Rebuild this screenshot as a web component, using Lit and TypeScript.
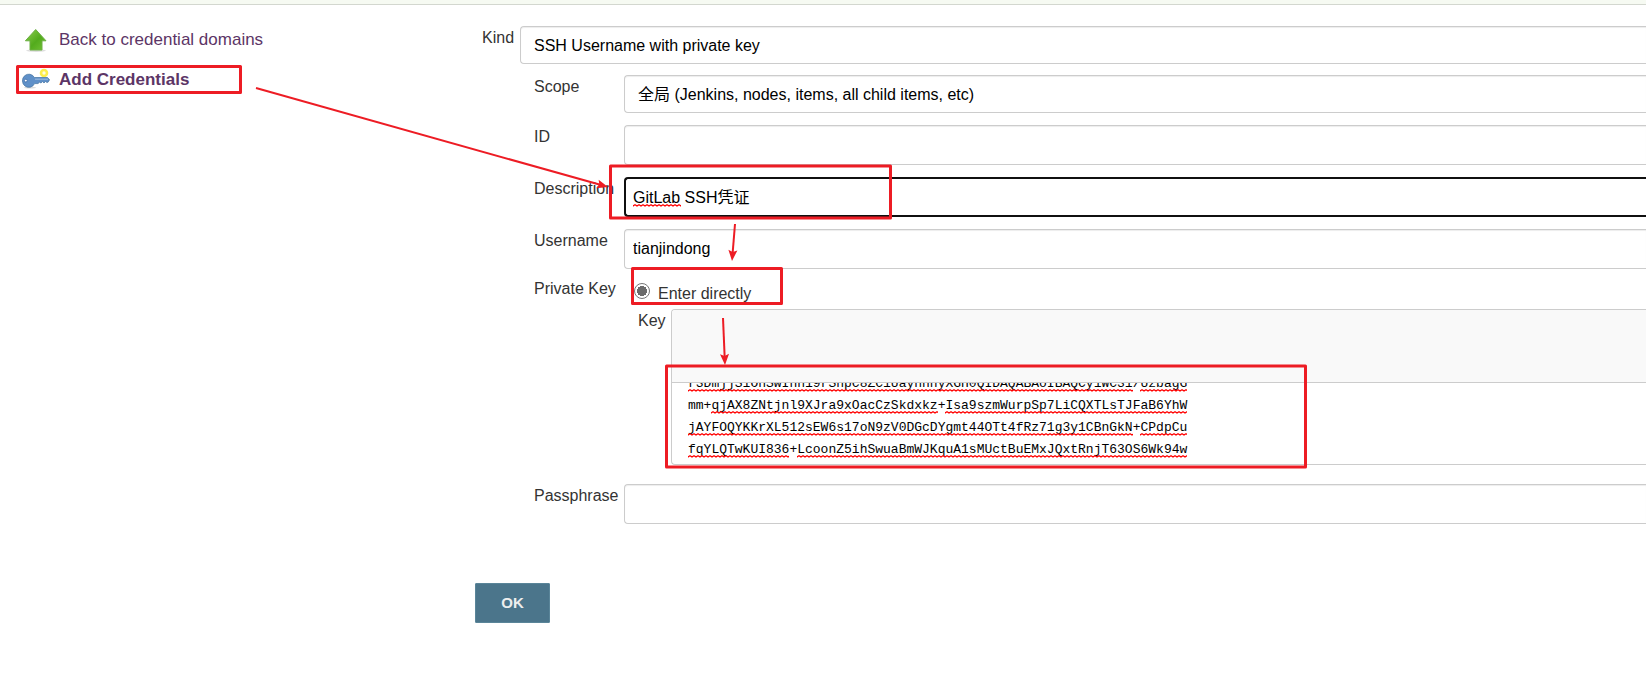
import { LitElement, html, css, svg } from "lit";
import { customElement } from "lit/decorators.js";

const KEY_LINES = [
  "r3DmjjS1OhSwIhh19rShpC8ZC1UayhhhyXGH0QIDAQABAoIBAQCy1WC31/UzbagG",
  "mm+qjAX8ZNtjnl9XJra9xOacCzSkdxkz+Isa9szmWurpSp7LiCQXTLsTJFaB6YhW",
  "jAYFOQYKKrXL512sEW6s17oN9zV0DGcDYgmt44OTt4fRz71g3y1CBnGkN+CPdpCu",
  "fqYLQTwKUI836+LcoonZ5ihSwuaBmWJKquA1sMUctBuEMxJQxtRnjT63OS6Wk94w",
];

@customElement("app-root")
export class AppRoot extends LitElement {
  static styles = css`
    :host {
      display: block;
      position: relative;
      min-height: 100vh;
      overflow: hidden;
      box-sizing: border-box;
      background: #fff;
      color: #333;
      font: 16px/22px "Liberation Sans", "Noto Sans CJK SC", sans-serif;
    }
    * { box-sizing: border-box; }
    .crumbs { height: 5px; background: #f6faf2; border-bottom: 1px solid #d3d7cf; }
    .page { display: grid; grid-template-columns: 475px minmax(0, 1fr); padding-top: 21px; }
    .side { padding: 2px 0 0 22px; display: flex; flex-direction: column; gap: 16px; }
    .task {
      display: flex; align-items: center; gap: 9px; height: 24px;
      font-size: 17px; color: #5c3566; text-decoration: none;
    }
    .current { font-weight: bold; }
    .task svg { width: 28px; height: 28px; flex: none; }
    .row { display: grid; grid-template-columns: 91px minmax(0, 1fr); margin-bottom: 12px; align-items: start; }
    .name { padding: 1px 0 0 1px; }
    .kind { grid-template-columns: 39px minmax(0, 1fr); padding-left: 6px; margin-bottom: 11px; }
    .nested { padding-left: 58px; }
    .tight { margin-bottom: 8px; }
    .flush { margin-bottom: 0; }
    .keyrow { grid-template-columns: 34px minmax(0, 1fr); padding-left: 162px; margin-bottom: 19px; }
    input.text, select {
      appearance: none; width: 100%; margin: 0; display: block;
      border: 1px solid #ccc; border-right: 0; border-radius: 4px 0 0 4px;
      background: #fff; color: #000; font: inherit; outline: 0;
      box-shadow: inset 0 1px 1px rgba(0, 0, 0, 0.075);
    }
    input.text { height: 40px; padding: 0 8px; }
    select { height: 38px; padding: 2px 13px 0; }
    input.active { border: 2px solid #101010; border-right: 0; padding: 0 7px 2px; box-shadow: none; }
    .choice { display: flex; align-items: flex-start; gap: 8px; padding: 6px 0 4px 10px; }
    .choice input {
      appearance: none; margin: 0; width: 16px; height: 16px; border-radius: 50%;
      border: 1px solid #767676; background: radial-gradient(circle, #6b6b6b 5px, #fff 5px);
    }
    .secret { border: 1px solid #ccc; border-right: 0; border-radius: 4px 0 0 4px; overflow: hidden; }
    .bar { height: 72px; background: #f9f9f9; }
    .editor { position: relative; border-top: 1px solid #ccc; height: 82px; overflow: hidden; }
    textarea, .marks { font: 13px/22px "Liberation Mono", monospace; padding: 3px 16px; }
    textarea {
      display: block; width: 100%; height: 100%; border: 0; margin: 0; outline: 0; resize: none;
      background: none; color: #000; white-space: pre; overflow: hidden;
    }
    .marks { position: absolute; left: 0; bottom: 0; padding-bottom: 6px; pointer-events: none; }
    .markline { display: flex; gap: 1ch; height: 22px; align-items: flex-end; }
    .wave {
      height: 3px;
      background: url("data:image/svg+xml,%3Csvg xmlns='http://www.w3.org/2000/svg' width='4' height='3'%3E%3Cpath d='M-1 .5L0 2L2 .8L4 2L5 .5' fill='none' stroke='%23f00' stroke-width='1.3'/%3E%3C/svg%3E") repeat-x;
    }
    .spelled { position: relative; }
    .spelled .wave { position: absolute; left: 9px; bottom: 10px; width: 48px; }
    button {
      margin: 59px 0 0; width: 75px; height: 40px; border: 1px solid #5a8599; border-radius: 1px;
      background: #4b758b; color: #eee; font: bold 15px/22px "Liberation Sans", sans-serif; padding: 0;
    }
    .notes { position: absolute; left: 0; top: 0; width: 1646px; height: 696px; pointer-events: none; }
  `;

  firstUpdated() {
    const area = this.renderRoot.querySelector("textarea")!;
    area.scrollTop = area.scrollHeight;
  }

  private marks(line: string) {
    return html`<div class="markline">
      ${line.split(/[+/]/).map((run) =>
        html`<span class=${run === "mm" ? "" : "wave"} style="width:${run.length}ch"></span>`)}
    </div>`;
  }

  private arrow(x1: number, y1: number, x2: number, y2: number) {
    const a = Math.atan2(y2 - y1, x2 - x1);
    const deg = (a * 180) / Math.PI;
    return svg`<path d="M${x1} ${y1}L${x2 - 8 * Math.cos(a)} ${y2 - 8 * Math.sin(a)}" />
      <path d="M0 0L-11 -4.5L-9 0L-11 4.5Z" fill="#ed1c24" stroke="none" transform="translate(${x2} ${y2}) rotate(${deg})" />`;
  }

  render() {
    return html`
      <div class="crumbs"></div>
      <div class="page">
        <nav class="side">
          <a class="task" href="#back">
            <svg viewBox="0 0 28 28" aria-hidden="true">
              <defs>
                <linearGradient id="g" x1="0" y1="0" x2="1" y2="1">
                  <stop offset="0" stop-color="#8fd050" /><stop offset=".55" stop-color="#53ab1d" /><stop offset="1" stop-color="#73c336" />
                </linearGradient>
              </defs>
              <ellipse cx="14" cy="24.6" rx="10" ry="1.3" fill="#000" opacity=".13" />
              <path d="M13.7 3.5L24 14.8H20V24H8V14.8H3.4Z" fill="url(#g)" stroke="#6cb043" stroke-linejoin="round" />
            </svg>
            Back to credential domains
          </a>
          <a class="task current" href="#add">
            <svg viewBox="0 0 28 28" aria-hidden="true">
              <ellipse cx="8" cy="21.6" rx="6" ry="1" fill="#000" opacity=".14" />
              <circle cx="22" cy="7" r="3" fill="#fffde0" stroke="#fdee4c" stroke-width="2.6" />
              <path d="M12.4 11.5H25.5L27.6 13.8L26 16.3H24.5L23.5 15.5L22 17L20.5 15.6L19 17L17.5 16.2L16 17.6H12.6A6.4 6.6 0 1 1 12.4 11.5Z" fill="#5f90c8" stroke="#41719f" stroke-width=".7" />
              <path d="M13 13.2H26" stroke="#9dbce0" />
              <circle cx="3.8" cy="14.6" r="1.4" fill="#fff" stroke="#3a69a5" stroke-width=".8" />
            </svg>
            Add Credentials
          </a>
        </nav>
        <form @submit=${(e: Event) => e.preventDefault()}>
          <div class="row kind">
            <label class="name" for="kind">Kind</label>
            <select id="kind"><option>SSH Username with private key</option></select>
          </div>
          <div class="row nested">
            <label class="name" for="scope">Scope</label>
            <select id="scope"><option>全局 (Jenkins, nodes, items, all child items, etc)</option></select>
          </div>
          <div class="row nested">
            <label class="name" for="id">ID</label>
            <input class="text" id="id" type="text" />
          </div>
          <div class="row nested">
            <label class="name" for="description">Description</label>
            <div class="spelled">
              <input class="text active" id="description" type="text" value="GitLab SSH凭证" />
              <span class="wave"></span>
            </div>
          </div>
          <div class="row nested tight">
            <label class="name" for="username">Username</label>
            <input class="text" id="username" type="text" value="tianjindong" />
          </div>
          <div class="row nested flush">
            <span class="name">Private Key</span>
            <div class="choice">
              <input id="direct" type="radio" name="source" checked />
              <label for="direct">Enter directly</label>
            </div>
          </div>
          <div class="row keyrow">
            <label class="name" for="key">Key</label>
            <div class="secret">
              <div class="bar"></div>
              <div class="editor">
                <textarea id="key" spellcheck="false" .value=${KEY_LINES.join("\n")}></textarea>
                <div class="marks" aria-hidden="true">${KEY_LINES.map((l) => this.marks(l))}</div>
              </div>
            </div>
          </div>
          <div class="row nested flush">
            <label class="name" for="passphrase">Passphrase</label>
            <input class="text" id="passphrase" type="password" />
          </div>
          <button type="submit">OK</button>
        </form>
      </div>
      <svg class="notes" viewBox="0 0 1646 696" fill="none" stroke="#ed1c24" stroke-width="2" aria-hidden="true">
        <g stroke-width="3" stroke-linejoin="round">
          <rect x="17.5" y="66.5" width="223" height="26" />
          <rect x="610.5" y="166" width="280" height="52" />
          <rect x="632.5" y="268.5" width="149" height="35" />
          <rect x="666.5" y="366" width="639" height="101" />
        </g>
        ${this.arrow(256, 88, 608, 187)}
        ${this.arrow(735, 224, 732, 261)}
        ${this.arrow(723, 318, 725, 365)}
      </svg>
    `;
  }
}
